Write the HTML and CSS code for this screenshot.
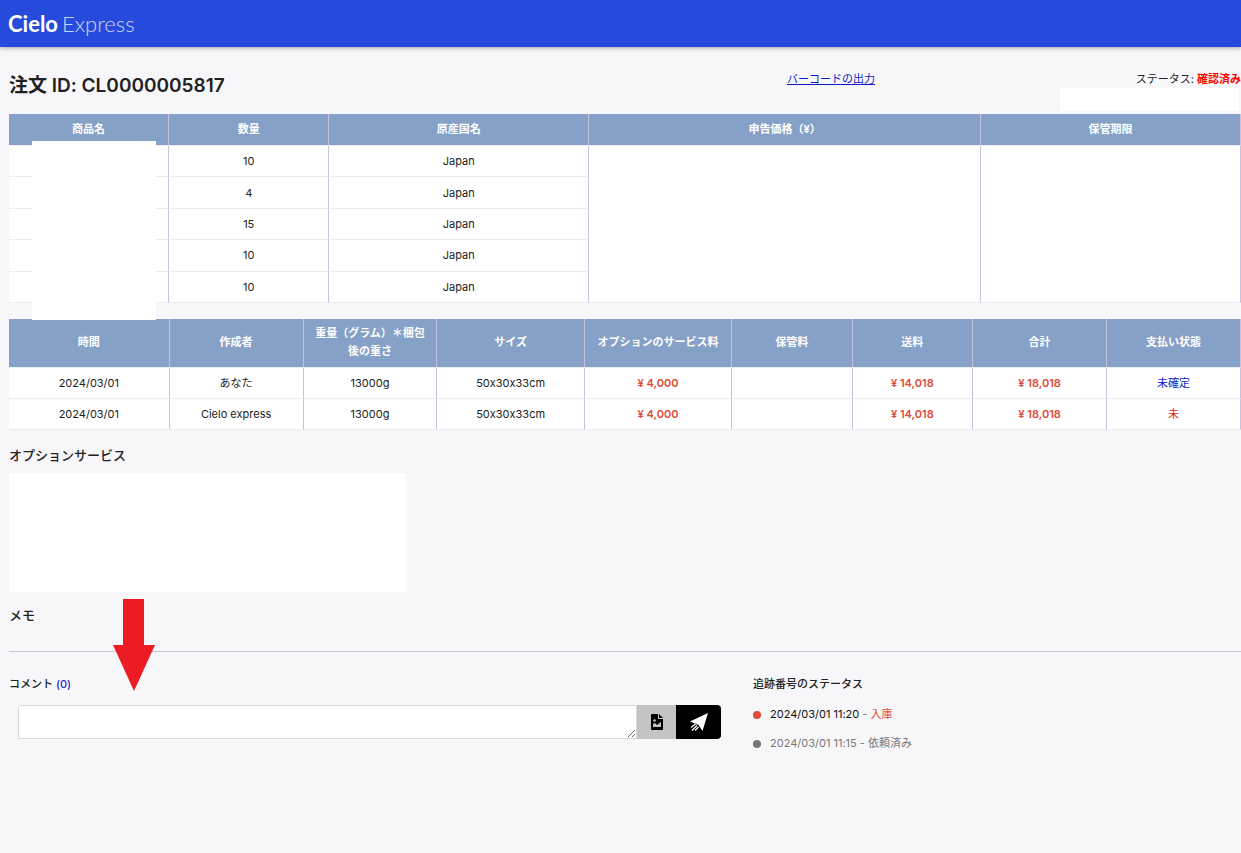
FILE: index.html
```html
<!DOCTYPE html>
<html lang="ja">
<head>
<meta charset="utf-8">
<title>注文 CL0000005817</title>
<link rel="stylesheet" href="styles.css">
</head>
<body>
<header class="topbar"><a class="logo" href="#"><b>Cielo</b><span>Express</span></a></header>
<main class="page">
  <section class="order-head">
    <h1>注文 ID: CL0000005817</h1>
    <a class="barcode" href="#">バーコードの出力</a>
    <p class="status">ステータス: <strong>確認済み</strong></p>
    <div class="cover cover-status"></div>
  </section>

  <div class="table-wrap">
    <table class="grid items">
      <colgroup><col class="w13"><col class="w13"><col class="w21"><col class="w32"><col class="w21"></colgroup>
      <thead><tr><th>商品名</th><th>数量</th><th>原産国名</th><th>申告価格（¥）</th><th>保管期限</th></tr></thead>
      <tbody>
        <tr><td></td><td>10</td><td>Japan</td><td rowspan="5"></td><td rowspan="5"></td></tr>
        <tr><td></td><td>4</td><td>Japan</td></tr>
        <tr><td></td><td>15</td><td>Japan</td></tr>
        <tr><td></td><td>10</td><td>Japan</td></tr>
        <tr><td></td><td>10</td><td>Japan</td></tr>
      </tbody>
    </table>
    <div class="cover cover-names"></div>
  </div>

  <table class="grid charges">
    <colgroup><col class="w12"><col class="w10"><col class="w10"><col class="w11"><col class="w11"><col class="w9"><col class="w9"><col class="w10"><col class="w10"></colgroup>
    <thead><tr><th>時間</th><th>作成者</th><th>重量（グラム）＊梱包後の重さ</th><th>サイズ</th><th>オプションのサービス料</th><th>保管料</th><th>送料</th><th>合計</th><th>支払い状態</th></tr></thead>
    <tbody>
      <tr><td>2024/03/01</td><td>あなた</td><td>13000g</td><td>50x30x33cm</td><td class="money">¥ 4,000</td><td></td><td class="money">¥ 14,018</td><td class="money">¥ 18,018</td><td><a href="#">未確定</a></td></tr>
      <tr><td>2024/03/01</td><td>Cielo express</td><td>13000g</td><td>50x30x33cm</td><td class="money">¥ 4,000</td><td></td><td class="money">¥ 14,018</td><td class="money">¥ 18,018</td><td class="unpaid">未</td></tr>
    </tbody>
  </table>

  <h2>オプションサービス</h2>
  <div class="options"></div>
  <section class="memo">
    <h2>メモ</h2>
    <svg class="arrow" width="42" height="92" viewBox="0 0 42 92" aria-hidden="true"><path fill="#ed1c24" d="M10 0h21v46h11L21 92 0 46h10z"/></svg>
  </section>

  <div class="bottom">
    <form class="comments">
      <label for="comment">コメント <span>(0)</span></label>
      <div class="composer">
        <textarea id="comment" rows="1"></textarea>
        <button type="button" class="attach" aria-label="画像を添付"><svg width="12" height="16" viewBox="0 0 12 16"><path d="M1 0h6v5h5v10a1 1 0 0 1-1 1H1a1 1 0 0 1-1-1V1a1 1 0 0 1 1-1zM8 0l4 4H8z"/><path fill="#c4c4c4" d="M2 13v-3l2-1 2 2 4-3v5z"/><circle cx="3.500" cy="6.500" r="1.300" fill="#c4c4c4"/></svg></button>
        <button type="button" class="send" aria-label="送信"><svg width="18" height="19" viewBox="0 0 18 19"><path fill="#fff" d="M18 0 12.500 18 8.500 12 0 8.500z"/><path fill="none" stroke="#fff" stroke-width="1.300" d="M5.500 11 1 14.500M7 12.500 2 17.500M8.500 14 5 17.500"/></svg></button>
      </div>
    </form>
    <section class="tracking">
      <h3>追跡番号のステータス</h3>
      <ul>
        <li class="current"><span>2024/03/01 11:20</span> - <em>入庫</em></li>
        <li>2024/03/01 11:15 - 依頼済み</li>
      </ul>
    </section>
  </div>
</main>
</body>
</html>
```

FILE: styles.css
```css
* { box-sizing: border-box; }
body {
  margin: 0;
  background: #f7f7fa;
  color: #212121;
  font: 11px/18px Inter, "Noto Sans CJK JP", sans-serif;
  font-feature-settings: "calt" 0;
}
h1, h2, h3, p, ul { margin: 0; padding: 0; }
a { color: #0b1bc9; text-decoration: none; }

.topbar {
  display: flex;
  align-items: center;
  height: 47px;
  padding: 0 8px;
  background: #264adc;
  box-shadow: 0 1px 4px rgba(0, 0, 0, 0.35);
}
.logo { display: flex; gap: 4px; color: #fff; font: 22px/28px Lato, sans-serif; }
.logo b { font-weight: 700; }
.logo span { font-weight: 300; opacity: 0.75; }

.page { padding-left: 9px; }
.order-head {
  position: relative;
  display: grid;
  grid-template-columns: 778px 1fr auto;
  height: 67px;
  padding-top: 23px;
}
h1 { font-size: 19px; line-height: 32px; font-weight: 600; }
.barcode, .status { font-size: 11px; }
.barcode { text-decoration: underline; }
.status strong { color: #f00; }
.cover { position: absolute; background: #fff; }
.cover-status { right: 2px; top: 41px; width: 179px; height: 23px; }
.table-wrap { position: relative; margin-bottom: 16px; }
.cover-names { left: 23px; top: 27px; width: 124px; height: 179px; }

.grid { width: 100%; table-layout: fixed; border-collapse: separate; border-spacing: 0; text-align: center; }
.grid th, .grid td {
  padding: 6px;
  height: 31px;
  border-right: 1px solid #c5c3de;
  border-bottom: 1px solid #ededf0;
}
.grid th { height: 32px; padding: 5px 10px 7px; background: #86a1c7; color: #fff; font-weight: 700; }
.grid td { background: #fff; }
.items { height: 189px; }
.w9 { width: 9.78%; }
.w10 { width: 10.87%; }
.w11 { width: 11.96%; }
.w12 { width: 13.04%; }
.w13 { width: 13%; }
.w21 { width: 21.1%; }
.w32 { width: 31.8%; }
.grid .money { color: #dd4b39; font-weight: 600; }
.grid .unpaid { color: #d9251d; }

h2 { padding: 14px 0 7px; font-size: 13px; line-height: 22px; font-weight: 500; }
.options { width: 397px; height: 119px; background: #fff; }
.memo { position: relative; height: 60px; border-bottom: 1px solid #c4c7d4; }
.memo h2 { padding-top: 12px; }
.arrow { position: absolute; left: 104px; top: 7px; }

.bottom { display: grid; grid-template-columns: 712px 1fr; gap: 32px; padding-top: 23px; }
.comments label { font-weight: 500; }
.comments label span { color: #2626c9; }
.composer { display: flex; height: 34px; margin: 12px 0 0 9px; }
.composer textarea {
  flex: 1;
  min-width: 0;
  border: 1px solid #d9d9d9;
  border-radius: 2px 0 0 2px;
  background: #fff;
  font: inherit;
  resize: vertical;
}
.composer button { display: flex; align-items: center; justify-content: center; border: 0; padding: 0; }
.attach { width: 39px; background: #c4c4c4; }
.send { width: 45px; background: #000; border-radius: 0 4px 4px 0; }
.tracking h3 { font-size: 11px; font-weight: 500; }
.tracking ul { display: grid; gap: 11px; margin-top: 12px; list-style: none; }
.tracking li { position: relative; padding-left: 17px; color: #777; }
.tracking li::before {
  content: "";
  position: absolute;
  left: 0;
  top: 6px;
  width: 8px;
  height: 8px;
  border-radius: 50%;
  background: #777;
}
.tracking .current::before { background: #dd4b39; }
.current span { color: #111; }
.current em { color: #dd4b39; font-style: normal; }
```
